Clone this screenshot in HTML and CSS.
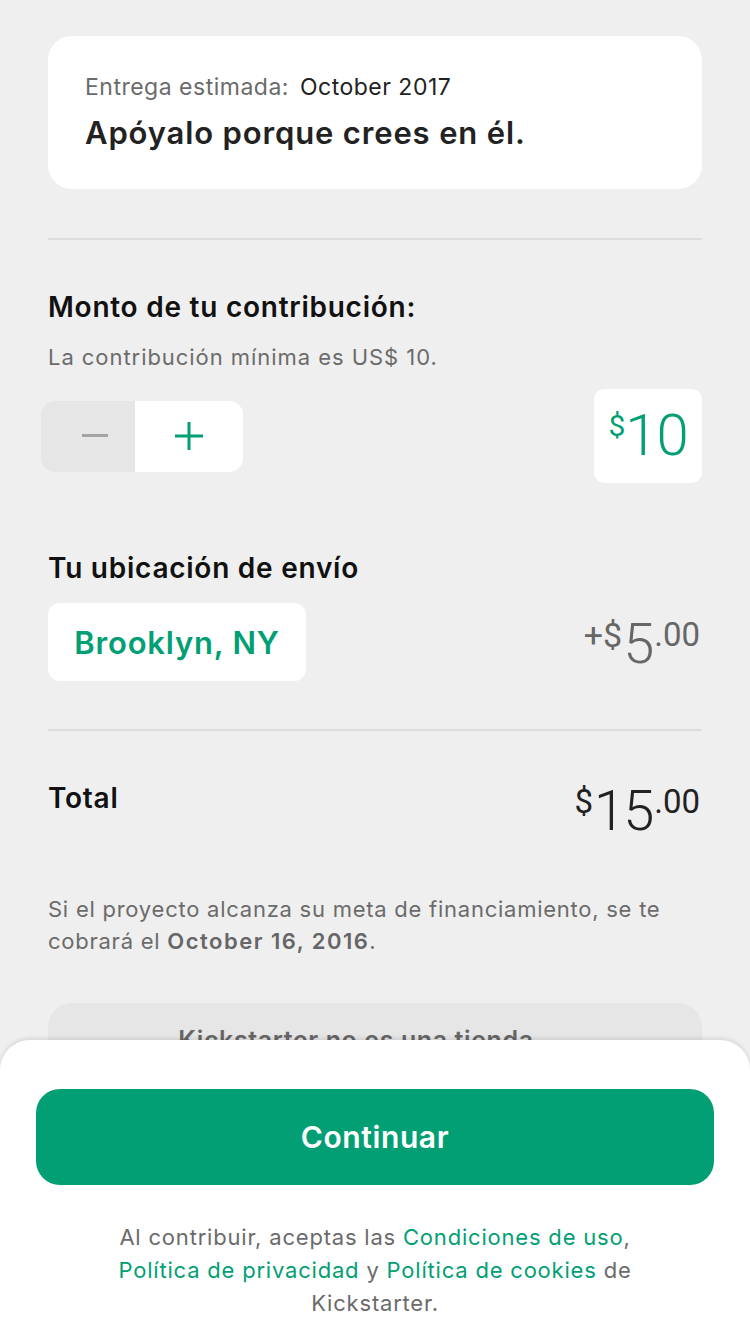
FILE: index.html
```html
<!DOCTYPE html>
<html lang="es">
<head>
<meta charset="utf-8">
<title>Contribución</title>
<link rel="stylesheet" href="styles.css">
</head>
<body>
<main class="page">
  <section class="reward-card">
    <p class="delivery"><span class="delivery-label">Entrega estimada:</span> <span class="delivery-date">October 2017</span></p>
    <h1 class="reward-title">Apóyalo porque crees en él.</h1>
  </section>

  <hr class="divider divider-first">

  <h2 class="section-title title-amount">Monto de tu contribución:</h2>
  <p class="hint">La contribución mínima es US$ 10.</p>

  <div class="amount-row">
    <div class="stepper">
      <button class="step step-minus" aria-label="Disminuir">
        <svg width="26" height="4" viewBox="0 0 26 4"><rect x="0" y="0" width="26" height="3" fill="#a3a3a3"/></svg>
      </button>
      <button class="step step-plus" aria-label="Aumentar">
        <svg width="28" height="28" viewBox="0 0 28 28"><rect x="0" y="12.5" width="28" height="3" fill="#029f74"/><rect x="12.5" y="0" width="3" height="28" fill="#029f74"/></svg>
      </button>
    </div>
    <div class="amount-box"><span class="amt-cur">$</span><span class="amt-val">10</span></div>
  </div>

  <h2 class="section-title title-ship">Tu ubicación de envío</h2>
  <div class="ship-row">
    <button class="location">Brooklyn, NY</button>
    <div class="price price-ship"><span class="p-small">+$</span><span class="p-big">5</span><span class="p-small">.00</span></div>
  </div>

  <hr class="divider divider-second">

  <div class="total-row">
    <h2 class="section-title total-label">Total</h2>
    <div class="price price-total"><span class="p-small">$</span><span class="p-big">15</span><span class="p-small">.00</span></div>
  </div>

  <p class="charge-note">Si el proyecto alcanza su meta de financiamiento, se te<br>cobrará el <strong class="charge-date">October 16, 2016</strong>.</p>

  <div class="notice"><p class="notice-title">Kickstarter no es una tienda</p></div>
</main>

<footer class="sheet">
  <button class="continue">Continuar</button>
  <p class="terms">Al contribuir, aceptas las <a href="#">Condiciones de uso</a>,<br><a href="#">Política de privacidad</a> y <a href="#">Política de cookies</a> de<br>Kickstarter.</p>
</footer>
</body>
</html>
```

FILE: styles.css
```css
* { box-sizing: border-box; }
html, body { margin: 0; padding: 0; }
body {
  background: #efefef;
  font-family: Inter, Roboto, "Liberation Sans", sans-serif;
  color: #111;
  width: 750px;
  height: 1334px;
  overflow: hidden;
  position: relative;
}
.page {
  padding: 36px 48px 0;
  display: flex;
  flex-direction: column;
}
.reward-card {
  background: #fff;
  border-radius: 24px;
  padding: 38px 37px 38px;
  height: 153px;
}
.delivery {
  margin: 0;
  font-size: 23px;
  line-height: 26px;
  letter-spacing: 0.5px;
}
.delivery-label { color: #6b6b6b; }
.delivery-date { color: #222; margin-left: 4px; }
.reward-title {
  margin: 15px 0 0;
  font-size: 31px;
  line-height: 36px;
  font-weight: 600;
  letter-spacing: 0.85px;
  color: #222;
}
.divider {
  border: 0;
  height: 2px;
  background: #dddddd;
  margin: 0;
}
.divider-first { margin-top: 49px; }
.section-title {
  margin: 0;
  font-size: 28px;
  line-height: 32px;
  font-weight: 600;
  letter-spacing: 0.75px;
  color: #111;
}
.title-amount { margin-top: 51px; }
.hint {
  margin: 20px 0 0;
  font-size: 22px;
  line-height: 28px;
  letter-spacing: 0.95px;
  color: #6b6b6b;
}
.amount-row {
  margin-top: 18px;
  display: flex;
  justify-content: space-between;
  align-items: center;
  height: 94px;
}
.stepper {
  display: flex;
  margin-left: -7px;
  height: 71px;
  border-radius: 14px;
  overflow: hidden;
}
.step {
  border: 0;
  padding: 0;
  margin: 0;
  display: flex;
  align-items: center;
  justify-content: center;
  height: 71px;
}
.step-minus { width: 94px; background: #e6e6e6; padding-left: 14px; }
.step-plus { width: 108px; background: #fff; }
.amount-box {
  width: 108px;
  height: 94px;
  background: #fff;
  border-radius: 10px;
  display: flex;
  align-items: flex-start;
  justify-content: center;
  padding-top: 16px;
  color: #029f74;
  font-family: Roboto, Inter, sans-serif;
}
.amt-cur { font-size: 30px; line-height: 34px; margin-top: 4px; }
.amt-val { font-size: 58px; line-height: 60px; font-weight: 300; letter-spacing: -1px; }
.title-ship { margin-top: 69px; }
.ship-row {
  margin-top: 19px;
  display: flex;
  justify-content: space-between;
  align-items: flex-start;
}
.location {
  border: 0;
  margin: 0;
  background: #fff;
  border-radius: 12px;
  height: 78px;
  width: 258px;
  padding: 0;
  font-family: inherit;
  font-size: 31px;
  font-weight: 600;
  letter-spacing: 0.8px;
  color: #029f74;
}
.price {
  display: flex;
  align-items: flex-start;
  font-family: Roboto, Inter, sans-serif;
}
.price-ship { color: #666; margin-top: 13px; margin-right: 2px; }
.price-total { color: #222; margin-top: 1px; margin-right: 2px; }
.p-small { font-size: 33px; line-height: 38px; font-weight: 400; }
.p-big { font-size: 56px; line-height: 60px; font-weight: 300; letter-spacing: -2px; margin: -2px 2px 0 1px; }
.price-ship .p-small:first-child { font-size: 34px; }
.divider-second { margin-top: 48px; }
.total-row {
  margin-top: 51px;
  display: flex;
  justify-content: space-between;
  align-items: flex-start;
  height: 60px;
}
.charge-note {
  margin: 51px 0 0;
  font-size: 22px;
  line-height: 32px;
  letter-spacing: 0.75px;
  color: #6b6b6b;
}
.charge-date { font-weight: 600; color: #666; letter-spacing: 1.5px; }
.notice {
  margin-top: 46px;
  background: #e6e6e6;
  border-radius: 24px;
  height: 200px;
  padding: 22px 38px 0 0;
}
.notice-title {
  margin: 0;
  text-align: center;
  font-size: 25px;
  font-weight: 600;
  letter-spacing: 0.6px;
  color: #666;
}
.sheet {
  position: absolute;
  left: 0;
  right: 0;
  bottom: 0;
  height: 294px;
  background: #fff;
  border-radius: 30px 30px 0 0;
  box-shadow: 0 -2px 4px rgba(0,0,0,0.1);
  padding: 49px 36px 0;
  display: flex;
  flex-direction: column;
  align-items: stretch;
}
.continue {
  border: 0;
  margin: 0;
  height: 96px;
  border-radius: 24px;
  background: #029f74;
  color: #fff;
  font-family: inherit;
  font-size: 30px;
  font-weight: 600;
  letter-spacing: 0.6px;
}
.terms {
  margin: 36px 0 0;
  text-align: center;
  font-size: 22px;
  line-height: 33px;
  letter-spacing: 0.8px;
  color: #6b6b6b;
}
.terms a { color: #029f74; text-decoration: none; }
```
